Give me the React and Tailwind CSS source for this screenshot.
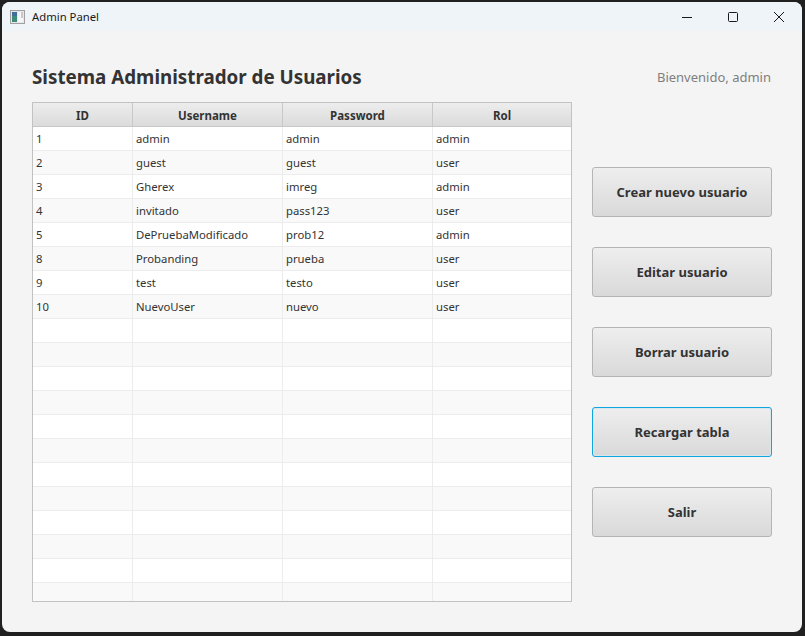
const rows = [
  ["1", "admin", "admin", "admin"],
  ["2", "guest", "guest", "user"],
  ["3", "Gherex", "imreg", "admin"],
  ["4", "invitado", "pass123", "user"],
  ["5", "DePruebaModificado", "prob12", "admin"],
  ["8", "Probanding", "prueba", "user"],
  ["9", "test", "testo", "user"],
  ["10", "NuevoUser", "nuevo", "user"],
];
const allRows = [...rows, ...Array.from({ length: 13 }, () => ["", "", "", ""])];
const buttons = ["Crear nuevo usuario", "Editar usuario", "Borrar usuario", "Recargar tabla", "Salir"];
const grid = "grid grid-cols-[100px_150px_150px_1fr]";

export default function App() {
  return (
    <div className="w-[805px] h-[636px] bg-[#202020] pt-[2px] pl-[2px] pr-[3px] pb-[4px] overflow-hidden font-['Noto_Sans','Open_Sans',sans-serif] text-[#333333]">
      <div className="h-full rounded-[8px] bg-[#f4f4f4] overflow-hidden flex flex-col">
        <div className="h-[29px] shrink-0 bg-[#eff4f9] flex items-center pl-[8px] pt-[1px] text-[11.3px] text-[#1a1a1a]">
          <svg width="15" height="14" viewBox="0 0 15 14" className="mr-[7px]">
            <rect x="0.5" y="0.5" width="14" height="13" fill="#e8e8e8" stroke="#a0a0a0" />
            <rect x="2" y="2" width="5" height="10" fill="#3f8a7a" />
            <rect x="2" y="2" width="5" height="4" fill="#3f6f9a" />
            <rect x="8" y="2" width="5" height="10" fill="#f6f6f6" />
            <rect x="11" y="2" width="2" height="6" fill="#c9c9c9" />
          </svg>
          <span>Admin Panel</span>
          <div className="ml-auto flex items-center text-[#1a1a1a]">
            <div className="w-[46px] flex justify-center">
              <svg width="10" height="10" viewBox="0 0 10 10"><path d="M0 5.5H10" stroke="currentColor" /></svg>
            </div>
            <div className="w-[46px] flex justify-center">
              <svg width="10" height="10" viewBox="0 0 10 10"><rect x="0.5" y="0.5" width="9" height="9" rx="1" fill="none" stroke="currentColor" /></svg>
            </div>
            <div className="w-[46px] flex justify-center">
              <svg width="10" height="10" viewBox="0 0 10 10"><path d="M0 0L10 10M10 0L0 10" stroke="currentColor" /></svg>
            </div>
          </div>
        </div>
        <div className="flex-1 flex flex-col pl-[30px] pr-[30px] min-h-0">
          <div className="h-[71px] shrink-0 flex items-end justify-between pb-[11px]">
            <h1 className="text-[18.8px] leading-[28px] font-bold">Sistema Administrador de Usuarios</h1>
            <span className="text-[13px] leading-[28px] mr-[1px] text-[#7f7f7f]">Bienvenido, admin</span>
          </div>
          <div className="flex gap-[20px]">
            <div className="w-[540px] h-[500px] shrink-0 border border-[#c2c2c2] bg-white overflow-hidden text-[11.3px]">
              <div className={`${grid} h-[24px] font-bold text-[11.5px] bg-gradient-to-b from-[#ededed] to-[#dbdbdb] border-b border-[#c8c8c8]`}>
                {["ID", "Username", "Password", "Rol"].map((h) => (
                  <div key={h} className="flex items-center justify-center pt-[2px] border-r border-[#c8c8c8] last:border-r-0">{h}</div>
                ))}
              </div>
              {allRows.map((r, i) => (
                <div key={i} className={`${grid} h-[24px] border-b border-[#ececec] ${i % 2 ? "bg-[#f9f9f9]" : "bg-white"}`}>
                  {r.map((c, j) => (
                    <div key={j} className="flex items-center pl-[3px] pt-[2px] border-r border-[#ececec] last:border-r-0">{c}</div>
                  ))}
                </div>
              ))}
            </div>
            <div className="w-[180px] shrink-0 pt-[65px] flex flex-col gap-[30px]">
              {buttons.map((b) => (
                <button
                  key={b}
                  className={`h-[50px] pt-[2px] rounded-[3px] border bg-gradient-to-b from-[#eeeeee] to-[#d9d9d9] text-[13px] font-bold text-[#333333] ${b === "Recargar tabla" ? "border-[#0ea5e0] shadow-[inset_0_0_0_1px_#d9e6ec]" : "border-[#b5b5b5]"}`}
                >
                  {b}
                </button>
              ))}
            </div>
          </div>
        </div>
      </div>
    </div>
  );
}
